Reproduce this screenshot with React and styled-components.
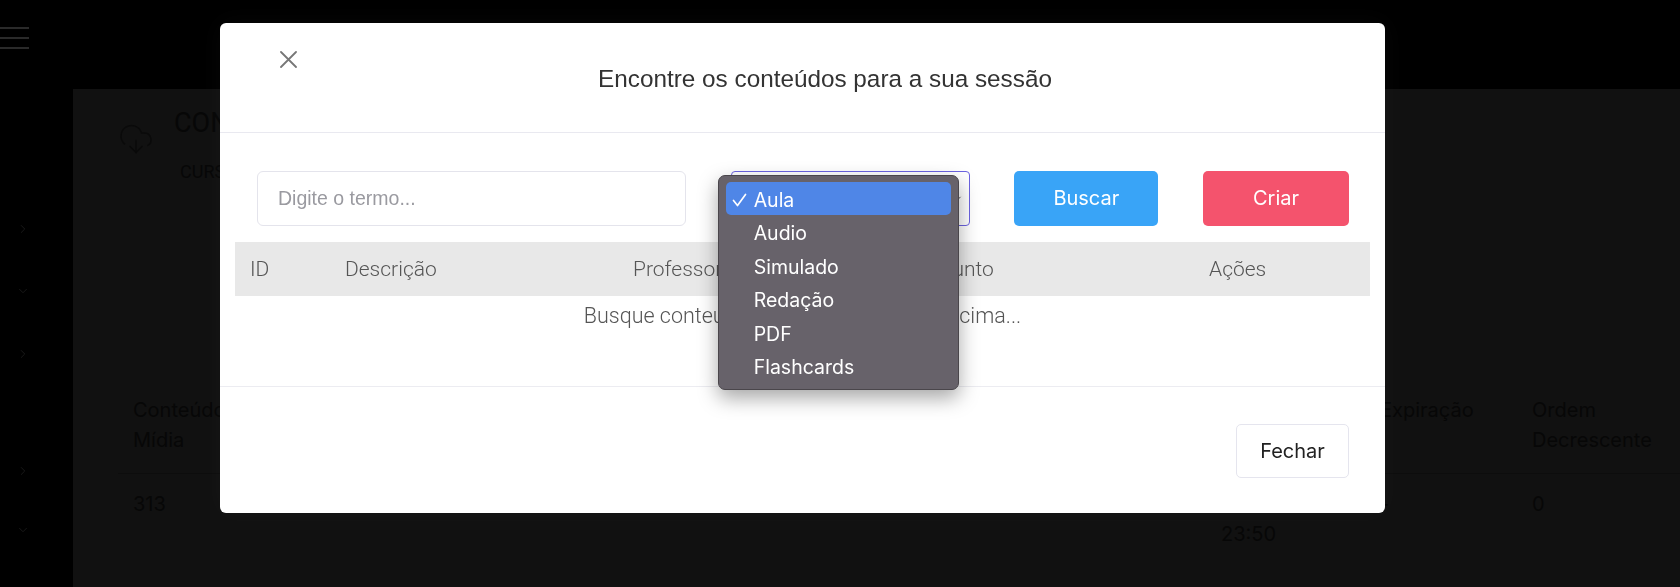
import React from "react";
import styled, { createGlobalStyle } from "styled-components";
import { CloudDownload, ChevronRight, ChevronDown } from "lucide-react";

const GlobalStyle = createGlobalStyle`
  html, body {
    margin: 0;
    padding: 0;
    background: #111;
  }
  * {
    box-sizing: border-box;
  }
`;

/* ---------- dimmed page behind the modal ---------- */

const Page = styled.div`
  display: grid;
  grid-template-columns: 73px 1fr;
  height: 587px;
  overflow: hidden;
  background: #111;
`;

const Sidebar = styled.aside`
  background: #000;
  display: flex;
  flex-direction: column;
`;

const Burger = styled.div`
  display: flex;
  flex-direction: column;
  gap: 8.5px;
  width: 29px;
  margin-top: 27px;
`;

const BurgerLine = styled.span`
  display: block;
  height: 1.5px;
  background: #2a2a2a;
`;

const NavList = styled.nav`
  display: flex;
  flex-direction: column;
  align-items: center;
  width: 46px;
`;

const NavArrow = styled.span`
  display: flex;
  margin-top: ${({ $gap }) => $gap}px;
  color: #1c1c1c;
`;

const Main = styled.div`
  display: flex;
  flex-direction: column;
`;

const TopBar = styled.header`
  height: 89px;
  background: #000;
`;

const Content = styled.section`
  flex: 1;
  padding: 18px 0 0 45px;
`;

const HeadRow = styled.div`
  display: flex;
  align-items: flex-start;
`;

const HeadIcon = styled.span`
  display: flex;
  margin-top: 14px;
  color: #0a0a0a;
`;

const HeadText = styled.div`
  margin-left: 20px;
  font-family: Roboto, "Liberation Sans", sans-serif;
  color: #070707;
`;

const HeadTitle = styled.div`
  font-size: 27px;
  line-height: 32px;
  white-space: nowrap;
`;

const HeadSub = styled.div`
  margin: 21px 0 0 6px;
  font-size: 18px;
  line-height: 24px;
  white-space: nowrap;
`;

const BgTable = styled.div`
  margin-top: 193px;
  display: grid;
  grid-template-columns: 150px 938px 159px 152px 1fr;
  font-family: Inter, "Open Sans", sans-serif;
  font-size: 20px;
  line-height: 30px;
  color: #070707;
`;

const BgHead = styled.div`
  padding: 18px 15px 18px;
  border-bottom: 1px solid #0d0d0d;
`;

const BgCell = styled.div`
  padding: 15px 15px 0;
`;

/* ---------- modal ---------- */

const Overlay = styled.div`
  position: fixed;
  inset: 0;
  display: flex;
  align-items: flex-start;
  padding: 22.5px 0 0 220px;
`;

const Modal = styled.div`
  width: 1165px;
  background: #fff;
  border-radius: 6px;
  box-shadow: 0 0 24px rgba(255, 255, 255, 0.03);
`;

const ModalHeader = styled.div`
  display: flex;
  align-items: center;
  height: 110px;
  padding-right: 41px;
  border-bottom: 1px solid #e9e9f0;
`;

const CloseButton = styled.button`
  align-self: flex-start;
  display: flex;
  align-items: center;
  justify-content: center;
  width: 36px;
  height: 36px;
  margin: 18.5px 0 0 50px;
  padding: 0;
  border: none;
  background: none;
  cursor: pointer;
`;

const Title = styled.h2`
  flex: 1;
  margin: 4px 0 0;
  text-align: center;
  font-family: "Liberation Sans", Arial, sans-serif;
  font-size: 24.3px;
  font-weight: 400;
  color: #333;
`;

const ModalBody = styled.div`
  padding: 38px 36px 50px 37px;
`;

const FormRow = styled.div`
  display: grid;
  grid-template-columns: 429px 239px 144px 146px;
  justify-content: space-between;
  height: 55px;
`;

const TermInput = styled.input`
  height: 100%;
  padding: 0 20px;
  border: 1px solid #e4e4ec;
  border-radius: 6px;
  outline: none;
  font-family: "Liberation Sans", Arial, sans-serif;
  font-size: 19.5px;
  color: #333;

  &::placeholder {
    color: #9a9aa0;
  }
`;

const SelectWrap = styled.div`
  position: relative;
`;

const SelectBox = styled.div`
  display: flex;
  align-items: center;
  justify-content: flex-end;
  height: 100%;
  padding-right: 6px;
  border: 1px solid #6c63e0;
  border-radius: 4px;
  background: #fff;
  color: #444;
`;

const Popup = styled.ul`
  position: absolute;
  left: -13px;
  top: 4px;
  width: 241px;
  margin: 0;
  padding: 6px 7px;
  list-style: none;
  background: #67626a;
  border: 1px solid #4a464b;
  border-radius: 7px;
  box-shadow: 0 8px 20px rgba(0, 0, 0, 0.35);
  z-index: 5;
`;

const Option = styled.li`
  display: flex;
  align-items: center;
  height: 33.5px;
  padding: 3px 0 0 6px;
  border-radius: 5px;
  background: ${({ $selected }) => ($selected ? "#4f86e7" : "transparent")};
  font-family: Inter, "Liberation Sans", sans-serif;
  font-size: 19.5px;
  color: #fff;
`;

const Check = styled.span`
  display: flex;
  align-items: center;
  width: 22px;
`;

const ActionButton = styled.button`
  height: 100%;
  border: none;
  border-radius: 5px;
  background: ${({ $bg }) => $bg};
  color: #fff;
  font-family: Inter, "Open Sans", sans-serif;
  font-size: 20px;
  cursor: pointer;
`;

const Table = styled.div`
  margin: 16px -21px 0 -22px;
`;

const TableHead = styled.div`
  display: grid;
  grid-template-columns: 95px 288px 285px 291px 1fr;
  align-items: center;
  height: 54px;
  padding-left: 15px;
  background: #e8e8e8;
  font-family: Roboto, "Liberation Sans", sans-serif;
  font-weight: 300;
  font-size: 21px;
  color: #555;
`;

const EmptyRow = styled.div`
  display: flex;
  align-items: center;
  justify-content: center;
  height: 40px;
  font-family: Roboto, "Liberation Sans", sans-serif;
  font-weight: 300;
  font-size: 21.5px;
  color: #555;
`;

const ModalFooter = styled.div`
  display: flex;
  justify-content: flex-end;
  padding: 37px 36px 35px;
  border-top: 1px solid #ececf1;
`;

const CloseFooterButton = styled.button`
  width: 113px;
  height: 54px;
  border: 1px solid #e5e5ee;
  border-radius: 5px;
  background: #fff;
  color: #222;
  font-family: Inter, "Open Sans", sans-serif;
  font-size: 20px;
  cursor: pointer;
`;

const options = ["Aula", "Audio", "Simulado", "Redação", "PDF", "Flashcards"];
const columns = ["ID", "Descrição", "Professor", "Assunto", "Ações"];

export default function App() {
  return (
    <>
      <GlobalStyle />
      <Page>
        <Sidebar>
          <Burger>
            <BurgerLine />
            <BurgerLine />
            <BurgerLine />
          </Burger>
          <NavList>
            <NavArrow $gap={173}>
              <ChevronRight size={14} strokeWidth={1.5} />
            </NavArrow>
            <NavArrow $gap={48}>
              <ChevronDown size={14} strokeWidth={1.5} />
            </NavArrow>
            <NavArrow $gap={49}>
              <ChevronRight size={14} strokeWidth={1.5} />
            </NavArrow>
            <NavArrow $gap={103}>
              <ChevronRight size={14} strokeWidth={1.5} />
            </NavArrow>
            <NavArrow $gap={45}>
              <ChevronDown size={14} strokeWidth={1.5} />
            </NavArrow>
          </NavList>
        </Sidebar>

        <Main>
          <TopBar />
          <Content>
            <HeadRow>
              <HeadIcon>
                <CloudDownload size={36} strokeWidth={1} />
              </HeadIcon>
              <HeadText>
                <HeadTitle>CONTEÚDOS DA SESSÃO</HeadTitle>
                <HeadSub>CURSO</HeadSub>
              </HeadText>
            </HeadRow>
            <BgTable>
              <BgHead>Conteúdo Mídia</BgHead>
              <BgHead />
              <BgHead>Liberação</BgHead>
              <BgHead>Expiração</BgHead>
              <BgHead>Ordem Decrescente</BgHead>
              <BgCell>313</BgCell>
              <BgCell />
              <BgCell>31/12/2025 23:50</BgCell>
              <BgCell>-</BgCell>
              <BgCell>0</BgCell>
            </BgTable>
          </Content>
        </Main>
      </Page>

      <Overlay>
        <Modal>
          <ModalHeader>
            <CloseButton aria-label="Fechar">
              <svg width="17" height="17" viewBox="0 0 17 17">
                <path
                  d="M1 1 L16 16 M16 1 L1 16"
                  stroke="#777"
                  strokeWidth="1.8"
                  strokeLinecap="round"
                />
              </svg>
            </CloseButton>
            <Title>Encontre os conteúdos para a sua sessão</Title>
          </ModalHeader>

          <ModalBody>
            <FormRow>
              <TermInput placeholder="Digite o termo..." />
              <SelectWrap>
                <SelectBox>
                  <ChevronDown size={11} strokeWidth={2} />
                </SelectBox>
                <Popup>
                  {options.map((opt, idx) => (
                    <Option key={opt} $selected={idx === 0}>
                      <Check>
                        {idx === 0 && (
                          <svg width="15" height="14" viewBox="0 0 15 14">
                            <path
                              d="M1.5 7.5 L5.5 12.5 L13.5 1.5"
                              fill="none"
                              stroke="#fff"
                              strokeWidth="1.7"
                              strokeLinecap="round"
                              strokeLinejoin="round"
                            />
                          </svg>
                        )}
                      </Check>
                      {opt}
                    </Option>
                  ))}
                </Popup>
              </SelectWrap>
              <ActionButton $bg="#39a4f7">Buscar</ActionButton>
              <ActionButton $bg="#f4536d">Criar</ActionButton>
            </FormRow>

            <Table>
              <TableHead>
                {columns.map((c) => (
                  <span key={c}>{c}</span>
                ))}
              </TableHead>
              <EmptyRow>Busque conteúdos utilizando os filtros acima...</EmptyRow>
            </Table>
          </ModalBody>

          <ModalFooter>
            <CloseFooterButton>Fechar</CloseFooterButton>
          </ModalFooter>
        </Modal>
      </Overlay>
    </>
  );
}
